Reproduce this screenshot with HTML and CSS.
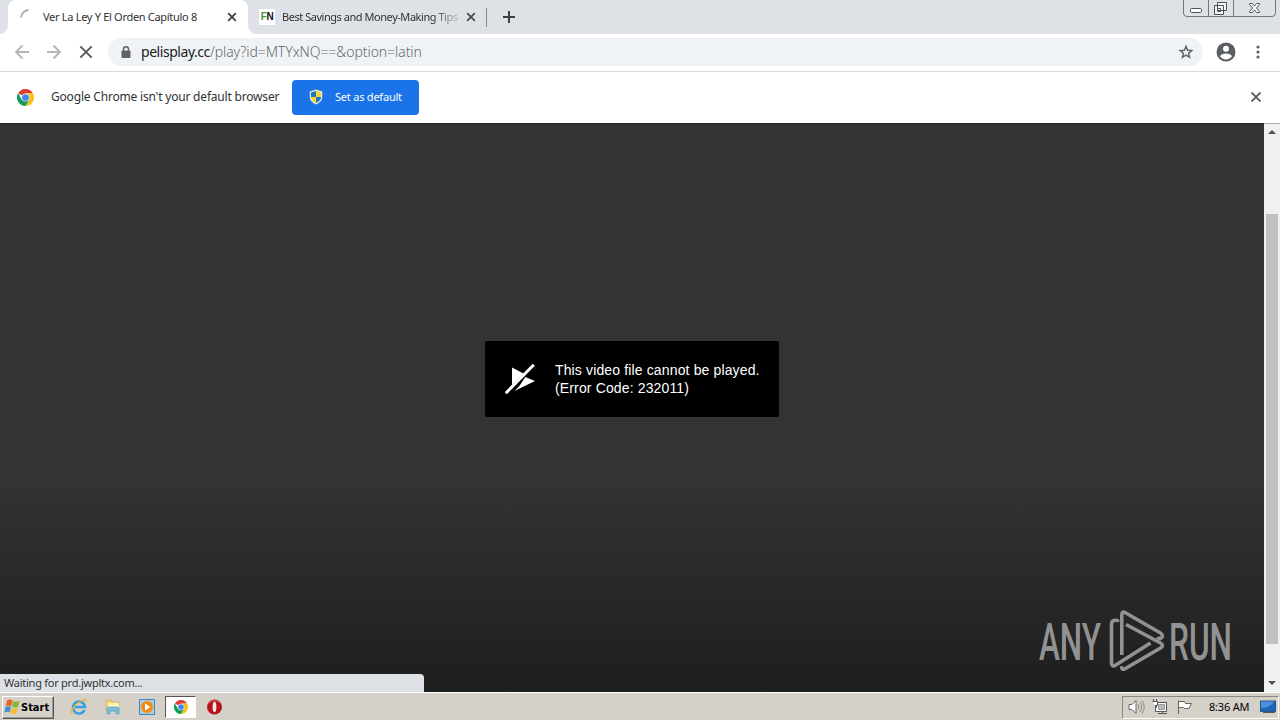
FILE: index.html
```html
<!DOCTYPE html>
<html lang="en">
<head>
<meta charset="utf-8">
<title>Ver La Ley Y El Orden Capítulo 8</title>
<link rel="stylesheet" href="styles.css">
</head>
<body>
<svg class="defs" width="0" height="0">
  <symbol id="chrome" viewBox="0 0 48 48">
    <path fill="#e33b2e" d="M24 24 3.2 12A24 24 0 0 1 44.8 12H24z"/>
    <path fill="#fbc116" d="M24 12h20.8A24 24 0 0 1 24 48l10.4-18z"/>
    <path fill="#109d58" d="M3.2 12A24 24 0 0 0 24 48l10.4-18H13.6z"/>
    <circle cx="24" cy="24" r="11.500" fill="#e8eefb"/>
    <circle cx="24" cy="24" r="9.500" fill="#4285f4"/>
  </symbol>
</svg>
<div class="browser">
  <header class="tabstrip">
    <div class="tab tab-active">
      <svg class="spinner" width="16" height="16" viewBox="0 0 16 16"><path d="M1 8.500A8 8 0 0 1 8.500 1" fill="none" stroke="#aaa" stroke-width="1.8"/></svg>
      <span class="tab-title title-one">Ver La Ley Y El Orden Capítulo 8</span>
      <svg class="tab-close" width="10" height="10" viewBox="0 0 10 10"><path d="m1.200 1.200 7.600 7.600m0-7.600L1.200 8.800" stroke="#3c4043" stroke-width="1.800"/></svg>
    </div>
    <div class="tab tab-back">
      <span class="favicon"><b class="fav-f">F</b><b>N</b></span>
      <span class="tab-title title-two">Best Savings and Money-Making Tips</span>
      <svg class="tab-close" width="10" height="10" viewBox="0 0 10 10"><path d="m1.200 1.200 7.600 7.600m0-7.600L1.200 8.800" stroke="#4a4d52" stroke-width="1.800"/></svg>
    </div>
    <svg class="new-tab" width="12" height="12" viewBox="0 0 12 12"><path d="M6 0v12M0 6h12" stroke="#3c4043" stroke-width="2"/></svg>
    <div class="window-controls">
      <svg width="93" height="17" viewBox="0 0 93 17" fill="none" stroke="#73777f">
        <path d="M.5 0v13q0 3.500 3.500 3.500h85q3.500 0 3.500-3.500V0M25.500 0v16M50.500 0v16"/>
        <g stroke="#4f535b"><rect x="7.500" y="8.500" width="11" height="4" rx="1" fill="#fff"/>
        <path fill="#f4f5f7" d="M34.500 2.500h9v8h-9zM31.500 5.500h9v9h-9zM34.500 8.500h3v3h-3z"/>
        <path fill="#f8f8fa" d="M66.500 3.500h3l2 2.500 2-2.500h3v1l-3 3.500 3 3.500v1h-3l-2-2.500-2 2.500h-3v-1l3-3.500-3-3.500z"/></g>
      </svg>
    </div>
  </header>
  <div class="toolbar">
    <svg class="nav" width="16" height="16" viewBox="0 0 16 16"><path d="M15 8H2m6.500-6.500L2 8l6.500 6.500" stroke="#b4b6b9"/></svg>
    <svg class="nav" width="16" height="16" viewBox="0 0 16 16"><path d="M1 8h13M7.500 1.500 14 8l-6.500 6.500" stroke="#b4b6b9"/></svg>
    <svg class="nav" width="16" height="16" viewBox="0 0 16 16"><path d="m2.300 2.300 11.400 11.400m0-11.400L2.300 13.700" stroke="#55585d"/></svg>
    <div class="omnibox">
      <svg width="10" height="13" viewBox="0 0 10 13"><path d="M2.500 5V3.300a2.500 2.500 0 0 1 5 0V5" fill="none" stroke="#5f6368" stroke-width="1.500"/><rect x=".5" y="4.500" width="9" height="7.500" rx="1" fill="#5f6368"/></svg>
      <span class="url"><span class="host">pelisplay.cc</span><span class="path">/play?id=MTYxNQ==&amp;option=latin</span></span>
      <svg class="star" width="16" height="16" viewBox="0 0 24 24"><path d="m12 3.500 2.400 5.800 6.300.5-4.800 4.100 1.500 6.100-5.400-3.200L6.600 20l1.500-6.100-4.800-4.100 6.300-.5z" fill="none" stroke="#5f6368" stroke-width="2.200"/></svg>
    </div>
    <svg class="avatar" width="20" height="20" viewBox="0 0 20 20"><circle cx="10" cy="10" r="9.500" fill="#5a5d62"/><circle cx="10" cy="6.800" r="3" fill="#fff"/><path d="M4 14.200C5 12 8 11.400 10 11.400s5 .6 6 2.800a7.200 7.200 0 0 1-12 0z" fill="#fff"/></svg>
    <svg class="menu" width="4" height="14" viewBox="0 0 4 14" fill="#5f6368"><circle cx="2" cy="2" r="1.600"/><circle cx="2" cy="7" r="1.600"/><circle cx="2" cy="12" r="1.600"/></svg>
  </div>
  <div class="infobar">
    <svg width="17" height="17"><use href="#chrome"/></svg>
    <span class="info-text">Google Chrome isn't your default browser</span>
    <button class="default-btn">
      <svg width="14" height="16" viewBox="0 0 14 16"><path d="M7 .5 13.300 2.500V8q0 5-6.300 7.500Q.7 13 .7 8V2.500z" fill="#e4e8d0"/><path d="M7 2v6H2V3.500z" fill="#1d79c4"/><path d="M7 2l5 1.500V8H7z" fill="#f8d13d"/><path d="M2 8h5v6Q2 11.500 2 8z" fill="#f8d13d"/><path d="M7 8h5q0 3.500-5 6z" fill="#1d79c4"/></svg>
      <span>Set as default</span>
    </button>
    <svg class="info-close" width="12" height="12" viewBox="0 0 12 12"><path d="m1.500 1.500 9 9m0-9-9 9" stroke="#5f6368" stroke-width="1.800"/></svg>
  </div>
  <main class="page">
    <section class="player">
      <div class="error">
        <svg width="32" height="32" viewBox="0 0 32 32" fill="#fff"><path d="M8 4.500V22L19.500 10.500zM21.300 14 31 18 10.300 28l4.700-4.400z"/><path d="m1.800 30.200 28-28.500" stroke="#fff" stroke-width="3"/></svg>
        <p><span>This video file cannot be played.</span><br><span>(Error Code: 232011)</span></p>
      </div>
      <svg class="watermark" width="206" height="64" viewBox="0 0 206 64">
        <g class="wm-text"><text x="2" y="51" textLength="62" lengthAdjust="spacingAndGlyphs">ANY</text><text x="132" y="51" textLength="63" lengthAdjust="spacingAndGlyphs">RUN</text></g>
        <g fill="none" stroke="#929292" stroke-width="3.600" stroke-linejoin="round">
          <path d="M80.500 13v-1.500q-6-1-6 3.500v39q0 4 3.500 2.500L113.500 34"/>
          <path d="M84.800 46V6q0-4 3.200-2.500L123.500 24q4 3.500 0 5.500-2 .5-3-1.500"/>
          <path d="M89 15.500 123.500 34q4 2.500 0 5L88 59.800q-3.500 1.500-3.500-2.500"/>
        </g>
      </svg>
      <div class="status">Waiting for prd.jwpltx.com...</div>
    </section>
    <aside class="scrollbar">
      <svg width="8" height="5" viewBox="0 0 8 5"><path d="M0 5 4 1l4 4z" fill="#505050"/></svg>
      <div class="thumb"></div>
      <svg width="8" height="5" viewBox="0 0 8 5"><path d="m0 0 4 4 4-4z" fill="#505050"/></svg>
    </aside>
  </main>
</div>
<footer class="taskbar">
  <div class="start">
    <svg width="16" height="16" viewBox="0 0 16 16"><path d="M3 1.500q3-2 5.500 0L7.200 7.200Q4 6 1.700 7.200z" fill="#e9642b"/><path d="M9 2q3 1.500 6.500 0L14 8q-3 1.500-6-.5z" fill="#84b93c"/><path d="M1.500 8q3-1.500 5.500 0l-1.300 5.500Q3 12 .3 13.500z" fill="#438cd8"/><path d="M7.700 8.500q3 2 6 .5l-1.300 5.500q-3 1.500-6-.5z" fill="#f5bd31"/></svg>
    <span>Start</span>
  </div>
  <div class="launch">
    <svg width="18" height="18" viewBox="0 0 18 18"><path d="M14.500 12A6 6 0 1 1 15 9H5" fill="none" stroke="#35a0dc" stroke-width="2.600"/><path d="M3 15Q0 17 1.500 13 4 7 11 3q6-3 5 1" fill="none" stroke="#e7b73e" stroke-width="1.300"/></svg>
    <svg width="18" height="18" viewBox="0 0 18 18"><path d="M2 3q0-1 1-1h4l1 2h7v9H2z" fill="#f2d675" stroke="#c9a94a" stroke-width=".6"/><path d="M4 5h11v4H4z" fill="#fff3b5"/><path d="M3 16v-5q0-2 2-2h8q2 0 2 2v5h-3v-3H6v3z" fill="#76bddd" stroke="#529bbd" stroke-width=".6"/></svg>
    <svg width="18" height="18" viewBox="0 0 18 18"><path d="M1.500 1.500h15v15h-15z" fill="#a5cfee" stroke="#4587bb"/><circle cx="9" cy="9" r="6" fill="#ef8b15" stroke="#f5a642" stroke-width=".8"/><path d="m7 5.500 5.500 3.500L7 12.500z" fill="#fff"/></svg>
    <div class="task-active"><svg width="14" height="14"><use href="#chrome"/></svg></div>
    <svg width="18" height="18" viewBox="0 0 18 18"><circle cx="9.500" cy="9" r="7.500" fill="#b5141a"/><ellipse cx="9.500" cy="9" rx="1.900" ry="5.200" fill="#f4e8e6"/><path d="M3.500 5q6-5 12 0" fill="none" stroke="#d8615e"/></svg>
  </div>
  <div class="tray">
    <svg width="17" height="16" viewBox="0 0 17 16" fill="none" stroke="#666"><path d="M1 5.500h3l4-4v13l-4-4H1z" fill="#fff"/><path d="M10 5q2 3 0 6m2-8q3.500 5 0 10m2-11.500q4.500 6.500 0 13" stroke="#888"/></svg>
    <svg class="network" width="18" height="16" viewBox="0 0 18 16" fill="#fff" stroke="#555"><path d="M5.500 3.500h10v9h-10z"/><path d="M7.500 5.500h6v5h-6z" fill="#bbb" stroke="#999"/><path d="M7 14.500h9M11.500 12.500v2M2.500 0v3M5.500 0v3M1.500 2.500h5v4h-2v6H8"/></svg>
    <svg class="flag" width="18" height="16" viewBox="0 0 18 16" fill="#fff" stroke="#666"><path d="M2.500 15V1.500M2.500 2.500h6l1 2h6L13 9.500H8.500l-1-1h-5"/></svg>
    <span class="clock">8:36 AM</span>
    <svg width="16" height="16" viewBox="0 0 16 16"><path d="M.5 2h15v10.500H.5z" fill="#2166bc" stroke="#295388"/><path d="M1 9Q10 9 14 2.500H1z" fill="#4d91dc"/><path d="M3 13.500h12" stroke="#555"/></svg>
  </div>
</footer>
</body>
</html>
```
FILE: styles.css
```css
* { box-sizing: border-box; }
body { margin: 0; width: 1280px; height: 720px; overflow: hidden; display: flex; flex-direction: column; font: 11px "Noto Sans", sans-serif; color: #303236; background: #d6d1c8; }
svg { display: block; flex: none; }
.defs { position: absolute; }
.browser { height: 692px; display: flex; flex-direction: column; }
.tabstrip { height: 34px; flex: none; display: flex; align-items: center; background: #dee1e6; }
.tab { height: 34px; display: flex; align-items: center; position: relative; }
.tab-active { width: 240px; margin-left: 8px; background: #fff; border-radius: 8px 8px 0 0; padding-left: 12px; }
.tab-active::before, .tab-active::after { content: ""; position: absolute; bottom: 0; width: 8px; height: 8px; }
.tab-active::before { left: -8px; background: radial-gradient(circle at 0 0, transparent 7.500px, #fff 8px); }
.tab-active::after { right: -8px; background: radial-gradient(circle at 100% 0, transparent 7.500px, #fff 8px); }
.spinner { margin-right: 7px; }
.tab-title { white-space: nowrap; line-height: 18px; }
.title-one { width: 184px; letter-spacing: -.3px; }
.title-two { width: 177px; letter-spacing: -.46px; -webkit-mask-image: linear-gradient(90deg, #000 150px, transparent 182px); }
.tab-back { width: 239px; padding-left: 11px; }
.tab-back::after { content: ""; position: absolute; right: 0; top: 8px; width: 1px; height: 19px; background: #85888d; }
.favicon { width: 16px; height: 16px; background: #fff; margin-right: 7px; font: bold 10px/16px "Liberation Sans", sans-serif; letter-spacing: -.3px; text-align: center; color: #111; }
.fav-f { color: #37a03c; }
.tab-back .tab-close { margin-left: 7px; }
.new-tab { margin-left: 16px; }
.window-controls { margin-left: auto; margin-right: 4px; align-self: flex-start; }
.toolbar { height: 38px; flex: none; display: flex; align-items: center; background: #fff; border-bottom: 1px solid #d8dadd; padding: 0 0 1px 14px; }
.nav { margin-right: 16px; fill: none; stroke-width: 1.900; }
.omnibox { width: 1095px; height: 28px; border-radius: 14px; background: #f0f3f5; display: flex; align-items: center; padding-left: 13px; margin-left: -2px; }
.url { font-size: 14px; line-height: 20px; margin-left: 10px; letter-spacing: -.07px; font-weight: 300; }
.host { color: #202124; font-weight: 400; letter-spacing: -.45px; }
.path { color: #66696e; }
.star { margin-left: auto; margin-right: 9px; }
.avatar { margin-left: 13px; }
.menu { margin-left: 20px; }
.infobar { height: 51px; flex: none; display: flex; align-items: center; background: #fff; padding-left: 17px; }
.info-text { width: 228px; margin-left: 17px; padding-bottom: 2px; font-size: 12px; letter-spacing: -.19px; white-space: nowrap; }
.default-btn { width: 127px; height: 35px; margin-left: 13px; border: 0; border-radius: 4px; background: #1a73e8; color: #fff; font: 11px "Noto Sans", sans-serif; letter-spacing: -.22px; display: flex; align-items: center; padding: 0 0 1px 17px; gap: 12px; white-space: nowrap; }
.default-btn span { padding-bottom: 1px; }
.info-close { margin: 0 18px 1px auto; }
.page { flex: 1; display: flex; min-height: 0; }
.player { width: 1264px; position: relative; display: flex; justify-content: center; align-items: flex-start; background: linear-gradient(#333 0, #333 357px, #1e1e1e 568px); border-top: 1px solid #272727; }
.error { width: 294px; height: 76px; margin-top: 217px; background: #000; border-radius: 2px; display: flex; align-items: center; padding-left: 19px; color: #fff; }
.error p { margin: 0 0 0 19px; font: 14px/18px "Liberation Sans", sans-serif; letter-spacing: .14px; white-space: nowrap; }
.watermark { position: absolute; left: 1037px; top: 485px; overflow: visible; }
.wm-text { font: 500 51px Roboto, sans-serif; fill: #929292; }
.status { position: absolute; left: 0; bottom: 0; width: 424px; height: 18px; background: #dee1e6; border-top-right-radius: 4px; padding-left: 4px; line-height: 18px; letter-spacing: -.25px; }
.scrollbar { width: 16px; background: #f1f1f1; border-top: 1px solid #aaa; display: flex; flex-direction: column; align-items: center; padding: 5px 0 6px; justify-content: space-between; }
.thumb { width: 12px; height: 430px; margin-top: 42px; background: #c1c1c1; }
.taskbar { height: 28px; display: flex; align-items: center; background: #d6d1c8; border-top: 1px solid #fff; padding: 1px 1px 0 2px; }
.start { width: 52px; height: 23px; display: flex; align-items: center; padding-left: 1px; gap: 1px; font: bold 11px "DejaVu Sans Condensed", "DejaVu Sans", sans-serif; color: #000; border: 1px solid; border-color: #fff #555 #555 #fff; box-shadow: inset -1px -1px #999; }
.launch { display: flex; align-items: center; margin-left: 16px; gap: 16px; }
.task-active { width: 31px; height: 22px; margin: 0 -7px 0 -7px; display: flex; align-items: center; justify-content: center; background: #fff; border: 1px solid; border-color: #555 #fff #fff #555; }
.tray { width: 157px; height: 23px; margin-left: auto; display: flex; align-items: center; gap: 7px; padding-left: 5px; border: 1px solid; border-color: #888 #fff #fff #888; color: #000; }
.network, .flag { margin: 0 1px 0 -1px; }
.clock { width: 42px; margin: 0 2px 2px 7px; white-space: nowrap; letter-spacing: -.2px; }
```
